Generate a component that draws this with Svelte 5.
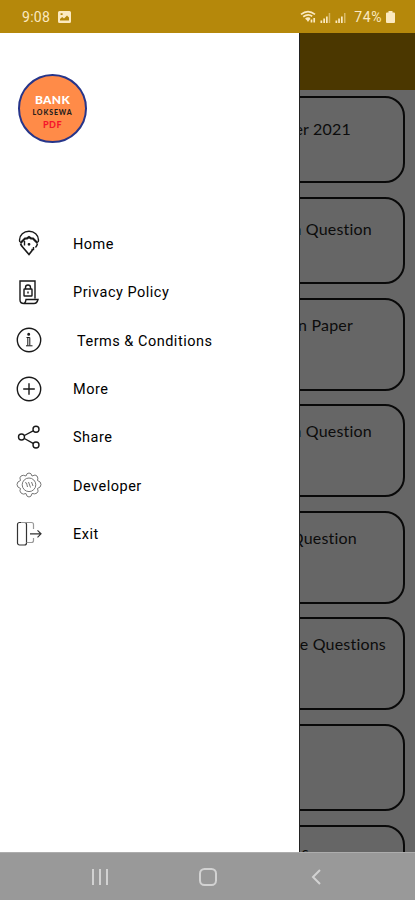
<script lang="ts">
  type Icon = "home" | "privacy" | "info" | "more" | "share" | "developer" | "exit"

  const menu: { icon: Icon; label: string; indent?: boolean }[] = [
    { icon: "home", label: "Home" },
    { icon: "privacy", label: "Privacy Policy" },
    { icon: "info", label: "Terms & Conditions", indent: true },
    { icon: "more", label: "More" },
    { icon: "share", label: "Share" },
    { icon: "developer", label: "Developer" },
    { icon: "exit", label: "Exit" },
  ]

  const cards = [
    { title: "er 2021", height: 87, end: 52, top: 20 },
    { title: "n Question", height: 87, end: 31, top: 19 },
    { title: "n Paper", height: 93, end: 50, top: 14 },
    { title: "n Question", height: 93, end: 31, top: 14 },
    { title: "Question", height: 93, end: 46, top: 14 },
    { title: "ve Questions", height: 93, end: 17, top: 14 },
    { title: "", height: 87, end: 17, top: 14 },
    { title: "s", height: 93, end: 94, top: 14 },
  ]
</script>

<div class="phone">
  <header class="status">
    <span class="time">9:08</span>
    <svg class="picture" width="13" height="12" viewBox="0 0 13 12">
      <path fill="currentColor" fill-rule="evenodd" d="M1.5 0h10Q13 0 13 1.5v9Q13 12 11.5 12h-10Q0 12 0 10.5v-9Q0 0 1.5 0ZM2 9.5h9V6.5L9 4.5 6 7.5 4.2 6 2 8ZM2.6 2.3v1.8h2V2.3Z" />
    </svg>
    <svg class="signals" width="48" height="14" viewBox="0 0 48 14">
      <g fill="none" stroke="currentColor" stroke-width="1.7">
        <path d="M1 4.3Q8 -1.2 15 4.3M3.2 6.8Q8 3.2 12.2 6.2M5.6 9.2Q8 7.3 10 8.8" />
        <path d="M11.5 12.5V9.5M14.2 12.5V8" />
      </g>
      <path fill="currentColor" d="M5.8 8.8h4.4L8 12ZM20.5 10.5h1.7V13h-1.7ZM23.3 8.5h1.7V13h-1.7ZM26 6.5h1.7V13H26ZM35.5 10.5h1.7V13h-1.7ZM38.2 8.5h1.7V13h-1.7ZM41 6.5h1.7V13H41Z" />
      <path fill="currentColor" opacity=".5" d="M28.7 3h1.5v10h-1.5ZM44 3h1.5v10H44Z" />
    </svg>
    <span class="percent">74%</span>
    <svg width="9" height="12" viewBox="0 0 9 12">
      <path fill="currentColor" d="M2.5 0h4v1.5H8q1 0 1 1V11q0 1-1 1H1q-1 0-1-1V2.500q0-1 1-1h1.5Z" />
    </svg>
  </header>

  <main>
    <div class="page">
      <div class="toolbar"></div>
      <div class="list">
        {#each cards as card}
          <div
            class="card"
            style:height="{card.height}px"
            style:padding-right="{card.end}px"
            style:padding-top="{card.top}px"
          >
            {card.title}
          </div>
        {/each}
      </div>
    </div>

    <aside class="drawer">
      <div class="logo">
        <span class="bank">BANK</span>
        <span class="loksewa">LOKSEWA</span>
        <span class="pdf">PDF</span>
      </div>
      <nav>
        {#each menu as item}
          <div class="item">
            <svg class={item.icon} width="26" height="26" viewBox="0 0 26 26">
              {#if item.icon === "home"}
                <path d="M4 12Q3.5 11 3.5 10a9.5 8.8 0 0 1 19 0q0 1-.5 2" />
                <path stroke-width="2.2" d="m4.500 13 4.500-4.500h2L13 7l2 1.500h2l4.500 4.500" />
                <path stroke-width="1.7" d="M4.500 13.500q.5 2 2.500 4l6 7 3.500-4.500" />
                <path d="M21.500 13.500q-.5 2.500-2 4M8.500 11v4.500M17.500 17v2.500h-2" />
                <circle cx="13" cy="14.3" r=".7" />
              {:else if item.icon === "privacy"}
                <path d="M4 21V2h15v17.500M4 21q0 3.500 4 3.500h10q3 0 4-4H10q-.5 4-3 4" />
                <rect x="8" y="10" width="8" height="7" rx=".5" />
                <path d="M9.500 10V8.500a2.500 2.500 0 0 1 5 0V10M12 12.500v2" />
              {:else if item.icon === "info"}
                <circle cx="13" cy="13" r="11.7" />
                <path stroke-width="1" d="M10.500 10.500h3.300v8M10 18.800h6.500M11.800 10.500v8" />
                <circle cx="12.7" cy="7.2" r=".8" />
              {:else if item.icon === "more"}
                <circle cx="13" cy="13" r="11.7" />
                <path d="M13 7.200v11.600M7.200 13h11.600" />
              {:else if item.icon === "share"}
                <circle cx="5.5" cy="13" r="3" />
                <circle cx="20" cy="5.2" r="3" />
                <circle cx="20" cy="21" r="3" />
                <path d="m8.400 11.500 8.700-4.700M8.400 14.500l8.700 4.900" />
              {:else if item.icon === "developer"}
                <path d="M10 4Q10.500 1 13 1t3 3q3.500-2 5 0t.5 4.500Q25 9.500 25 12.500t-3.500 4q1.500 3-.5 4.500t-5 .5q-.5 3.500-3 3.500t-3-3.500Q7 23 5 21t-.5-4.500Q1 15.500 1 12.500t3.500-4Q3 5.500 5 4t5 0Z" />
                <circle cx="13" cy="12.8" r="6.8" />
                <path d="M9 11q1-1 1.500 0l1 4M12.500 10l2 5.500M15.500 10l1.500 4" />
              {:else}
                <rect x="1.5" y="1.5" width="9" height="22.5" rx="2" />
                <path class="faint" d="M5 1.500h10.500q2 0 2 2V8M10.500 21.500h5q2 0 2-2V17" />
                <path d="M14 12.800h11M21.500 9.300l3.500 3.500-3.500 3.500" />
              {/if}
            </svg>
            <span class:indent={item.indent}>{item.label}</span>
          </div>
        {/each}
      </nav>
    </aside>
  </main>

  <footer class="navbar">
    <svg width="18" height="18" viewBox="0 0 18 18"><path d="M2 1v16M9 1v16M16 1v16" /></svg>
    <svg width="20" height="20" viewBox="0 0 20 20"><rect x="2" y="2" width="16" height="16" rx="4.5" /></svg>
    <svg width="18" height="18" viewBox="0 0 18 18"><path d="M13 2 6 9l7 7" /></svg>
  </footer>
</div>

<style>
  :global(body) {
    margin: 0;
  }

  .phone {
    display: grid;
    grid-template-rows: 33px 819px 48px;
    width: 415px;
    height: 900px;
    overflow: hidden;
    font-family: Roboto, "Liberation Sans", sans-serif;
  }

  .status {
    display: flex;
    align-items: center;
    box-sizing: border-box;
    padding: 1px 20px 0 22px;
    background: #b5880b;
    color: #fbe9c0;
    font-size: 14px;
  }
  .time {
    width: 29px;
    letter-spacing: 0.3px;
    margin-right: 7px;
  }
  .signals {
    margin-left: auto;
    margin-right: 6px;
  }
  .percent {
    margin-right: 4px;
    letter-spacing: 0.6px;
  }

  main {
    display: grid;
    grid-template-columns: 299px 1fr;
    overflow: hidden;
  }
  .page {
    grid-area: 1 / 1 / 2 / 3;
    height: 819px;
    overflow: hidden;
    background: #666;
  }
  .toolbar {
    height: 57px;
    background: #4b3700;
  }
  .list {
    display: flex;
    flex-direction: column;
    gap: 13.6px;
    padding: 6.4px 10px 0;
  }
  .card {
    flex: none;
    box-sizing: border-box;
    border: 2px solid #090909;
    border-radius: 20px;
    color: #0c0c0c;
    font: 16px/22px Lato, sans-serif;
    letter-spacing: 0.2px;
    text-align: right;
    white-space: nowrap;
  }

  .drawer {
    grid-area: 1 / 1;
    z-index: 1;
    width: 299px;
    background: #fff;
    border-right: 1px solid #222;
  }
  .logo {
    display: flex;
    flex-direction: column;
    align-items: center;
    box-sizing: border-box;
    width: 69px;
    height: 69px;
    margin: 41px 0 0 18px;
    padding-top: 17px;
    border: 2px solid #26358a;
    border-radius: 50%;
    background: #ff8b48;
    font-family: Lato, sans-serif;
    font-weight: 900;
  }
  .bank {
    color: #fff;
    font-size: 12px;
    line-height: 14px;
    letter-spacing: 0.3px;
  }
  .loksewa {
    color: #26201c;
    font-size: 7px;
    line-height: 11px;
    letter-spacing: 0.9px;
  }
  .pdf {
    color: #f5162b;
    font-size: 9px;
    line-height: 13px;
    letter-spacing: 0.5px;
  }

  nav {
    margin-top: 77px;
  }
  .item {
    display: flex;
    align-items: center;
    gap: 31px;
    height: 48.45px;
    padding-left: 16px;
    color: #000;
    font-size: 14.5px;
    letter-spacing: 0.5px;
  }
  .item svg {
    flex: none;
    fill: none;
    stroke: #191919;
    stroke-width: 1.4;
    margin-top: -2px;
  }
  .item .developer {
    stroke: #777;
    stroke-width: 1;
  }
  .item .exit {
    stroke: #333;
    stroke-width: 1.2;
  }
  .item .faint {
    stroke: #999;
  }
  .indent {
    padding-left: 4px;
  }

  .navbar {
    display: grid;
    grid-template-columns: repeat(3, 108px);
    justify-content: center;
    place-items: center;
    padding-top: 1px;
    box-sizing: border-box;
    background: #999;
    border-top: 1px solid #adadad;
  }
  .navbar svg {
    fill: none;
    stroke: #d2d2d2;
    stroke-width: 2;
  }
</style>
